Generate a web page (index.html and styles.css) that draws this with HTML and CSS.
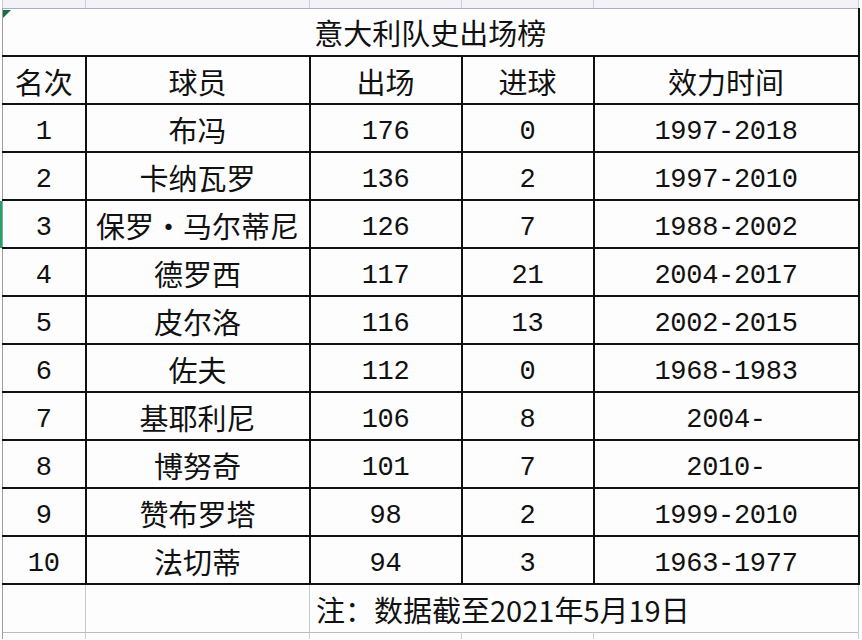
FILE: index.html
```html
<!DOCTYPE html>
<html lang="zh">
<head>
<meta charset="utf-8">
<title>意大利队史出场榜</title>
<link rel="stylesheet" href="styles.css">
</head>
<body>
<div class="sheet">
  <span class="sel-mark"></span>
  <span class="corner"></span>
  <table class="grid">
    <colgroup>
      <col class="c1"><col class="c2"><col class="c3"><col class="c4"><col class="c5">
    </colgroup>
    <tr class="strip"><td></td><td></td><td></td><td></td><td></td></tr>
    <tr class="title-row"><td colspan="5" class="title">意大利队史出场榜</td></tr>
    <tr class="row head"><td>名次</td><td>球员</td><td>出场</td><td>进球</td><td>效力时间</td></tr>
    <tr class="row"><td class="n">1</td><td>布冯</td><td class="n">176</td><td class="n">0</td><td class="n">1997-2018</td></tr>
    <tr class="row"><td class="n">2</td><td>卡纳瓦罗</td><td class="n">136</td><td class="n">2</td><td class="n">1997-2010</td></tr>
    <tr class="row"><td class="n">3</td><td>保罗·马尔蒂尼</td><td class="n">126</td><td class="n">7</td><td class="n">1988-2002</td></tr>
    <tr class="row"><td class="n">4</td><td>德罗西</td><td class="n">117</td><td class="n">21</td><td class="n">2004-2017</td></tr>
    <tr class="row"><td class="n">5</td><td>皮尔洛</td><td class="n">116</td><td class="n">13</td><td class="n">2002-2015</td></tr>
    <tr class="row"><td class="n">6</td><td>佐夫</td><td class="n">112</td><td class="n">0</td><td class="n">1968-1983</td></tr>
    <tr class="row"><td class="n">7</td><td>基耶利尼</td><td class="n">106</td><td class="n">8</td><td class="n">2004-</td></tr>
    <tr class="row"><td class="n">8</td><td>博努奇</td><td class="n">101</td><td class="n">7</td><td class="n">2010-</td></tr>
    <tr class="row"><td class="n">9</td><td>赞布罗塔</td><td class="n">98</td><td class="n">2</td><td class="n">1999-2010</td></tr>
    <tr class="row last"><td class="n">10</td><td>法切蒂</td><td class="n">94</td><td class="n">3</td><td class="n">1963-1977</td></tr>
    <tr class="note-row"><td></td><td></td><td colspan="3" class="note">注：数据截至2021年5月19日</td></tr>
    <tr class="strip bottom"><td></td><td></td><td></td><td></td><td></td></tr>
  </table>
</div>
</body>
</html>
```

FILE: styles.css
```css
html, body {
  margin: 0;
  padding: 0;
  background: #ffffff;
}

.sheet {
  position: relative;
  width: 862px;
  height: 640px;
  overflow: hidden;
  background: #fdfdfd;
  font-family: "Noto Sans CJK SC", "Noto Sans", sans-serif;
  color: #111;
}

.grid {
  margin-left: 2px;
  border-collapse: collapse;
  table-layout: fixed;
  width: 856px;
}

.c1 { width: 83px; }
.c2 { width: 224px; }
.c3 { width: 152px; }
.c4 { width: 132px; }
.c5 { width: 265px; }

.grid td {
  padding: 0;
  text-align: center;
  vertical-align: middle;
  white-space: nowrap;
  font-size: 29px;
  line-height: 1;
}

.strip td {
  height: 8px;
  background: #f3f3f7;
  border-left: 1px solid #c9ced8;
  border-right: 1px solid #c9ced8;
  border-bottom: 1px solid #a7b0c0;
}

.strip.bottom td {
  height: 6px;
  background: #fdfdfd;
  border-top: 1px solid #b6bcc7;
  border-bottom: none;
}

.title-row td {
  height: 46px;
  border-left: 1px solid #9aa0aa;
  border-right: 2px solid #111;
  border-bottom: 2px solid #111;
}

.title {
  padding-top: 1px;
}

.row td {
  height: 43px;
  border: 2px solid #111;
  padding-top: 3px;
}

.row td:first-child {
  border-left: 1px solid #9aa0aa;
}

.grid td.n {
  height: 38px;
  padding-top: 8px;
  font-family: "Liberation Mono", "DejaVu Sans Mono", monospace;
  font-size: 27px;
  letter-spacing: -0.3px;
}

.note-row td {
  height: 45px;
  border-left: 1px solid #c3c8d1;
  border-right: 1px solid #c3c8d1;
  border-top: 2px solid #111;
}

.note-row td:first-child {
  border-left: 1px solid #9aa0aa;
}

.grid td.note {
  text-align: left;
  padding-left: 6px;
  padding-top: 2px;
}

.strip.bottom td:first-child {
  border-left: 1px solid #9aa0aa;
}

.sel-mark {
  position: absolute;
  left: 0;
  top: 201px;
  width: 2px;
  height: 47px;
  background: #21a366;
}

.corner {
  position: absolute;
  left: 3px;
  top: 10px;
  width: 0;
  height: 0;
  border-top: 8px solid #1d6b40;
  border-right: 8px solid transparent;
  z-index: 2;
}
```
